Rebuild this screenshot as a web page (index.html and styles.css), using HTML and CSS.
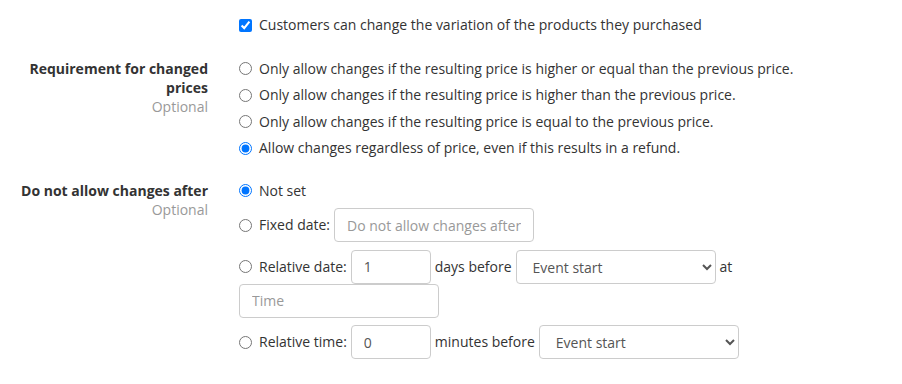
FILE: index.html
```html
<!DOCTYPE html>
<html>
<head>
<meta charset="utf-8">
<link rel="stylesheet" href="styles.css">
</head>
<body>
<div class="form">
  <div class="group g-check">
    <div class="label-col"></div>
    <div class="ctrl-col">
      <label class="opt"><input type="checkbox" checked><span>Customers can change the variation of the products they purchased</span></label>
    </div>
  </div>

  <div class="group g-price">
    <div class="label-col">
      <div class="lbl">Requirement for changed prices</div>
      <div class="optional">Optional</div>
    </div>
    <div class="ctrl-col list list-price">
      <label class="opt"><input type="radio" name="price"><span>Only allow changes if the resulting price is higher or equal than the previous price.</span></label>
      <label class="opt"><input type="radio" name="price"><span>Only allow changes if the resulting price is higher than the previous price.</span></label>
      <label class="opt"><input type="radio" name="price"><span>Only allow changes if the resulting price is equal to the previous price.</span></label>
      <label class="opt"><input type="radio" name="price" checked><span>Allow changes regardless of price, even if this results in a refund.</span></label>
    </div>
  </div>

  <div class="group g-after">
    <div class="label-col">
      <div class="lbl">Do not allow changes after</div>
      <div class="optional">Optional</div>
    </div>
    <div class="ctrl-col list list-after">
      <label class="opt"><input type="radio" name="after" checked><span>Not set</span></label>
      <div class="opt row"><input type="radio" name="after"><span>Fixed date:</span><input class="fc w200" type="text" placeholder="Do not allow changes after"></div>
      <div class="rel">
        <div class="opt row"><input type="radio" name="after"><span>Relative date:</span><input class="fc w80" type="text" value="1"><span>days before</span><select class="fc w200"><option>Event start</option></select><span>at</span></div>
        <input class="fc w200 time" type="text" placeholder="Time">
      </div>
      <div class="opt row"><input type="radio" name="after"><span>Relative time:</span><input class="fc w80" type="text" value="0"><span>minutes before</span><select class="fc w200"><option>Event start</option></select></div>
    </div>
  </div>
</div>
</body>
</html>
```

FILE: styles.css
```css
html, body {
  margin: 0;
  padding: 0;
  background: #fff;
}
body {
  font-family: "Open Sans", "Liberation Sans", sans-serif;
  font-size: 14px;
  color: #333;
}
.form {
  padding-top: 15px;
}
.group {
  display: grid;
  grid-template-columns: 223px 1fr;
}
.g-check { margin-bottom: 23.5px; }
.g-price { margin-bottom: 22.5px; }

.label-col {
  padding: 0 15px;
  text-align: right;
  line-height: 19px;
}
.lbl {
  font-weight: 700;
}
.optional {
  color: #999;
}
.ctrl-col {
  padding-left: 16px;
  line-height: 20px;
}
.list {
  display: flex;
  flex-direction: column;
  align-items: flex-start;
}
.list-price { gap: 6.5px; }
.list-after { gap: 7.5px; }

.opt {
  display: flex;
  align-items: center;
  gap: 4px;
  height: 20px;
}
.opt.row {
  height: 34px;
}
.opt input[type="radio"],
.opt input[type="checkbox"] {
  width: 13px;
  height: 13px;
  margin: 0 3px 0 0;
  flex: none;
}
.rel {
  display: flex;
  flex-direction: column;
  align-items: flex-start;
}
.fc {
  box-sizing: border-box;
  height: 34px;
  padding: 6px 12px;
  font-family: "Open Sans", "Liberation Sans", sans-serif;
  font-size: 14px;
  line-height: 20px;
  color: #555;
  background: #fff;
  border: 1px solid #ccc;
  border-radius: 4px;
  margin: 0;
}
.fc::placeholder {
  color: #999;
}
.w200 { width: 200px; }
.w80 { width: 80px; }
select.fc {
  padding: 6px 8px 6px 12px;
}
```
